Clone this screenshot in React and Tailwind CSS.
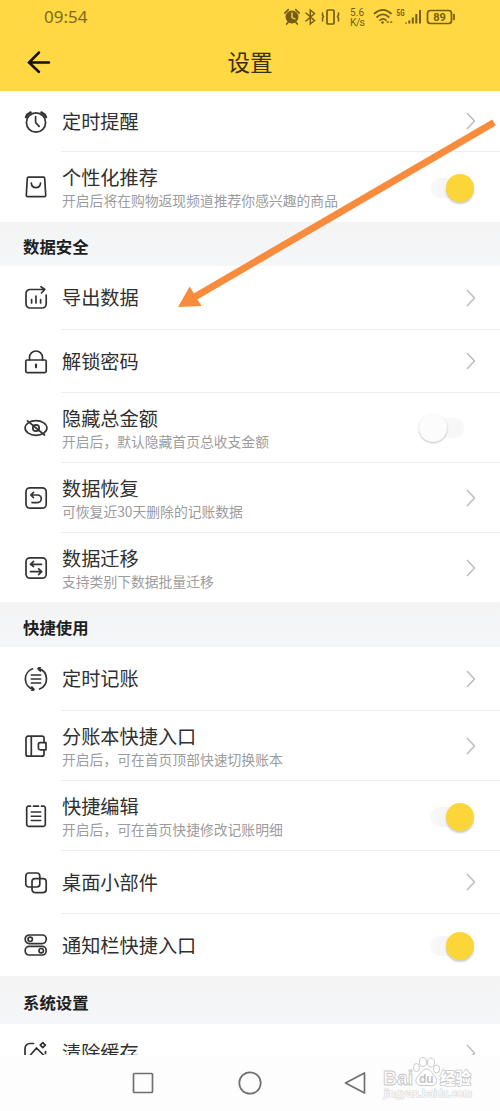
const icons = {
  alarm: (
    <>
      <circle cx="12" cy="12.5" r="9.6" />
      <path d="M2 7.2C2.8 5 4.4 3.4 6.6 2.4M22 7.2C21.2 5 19.6 3.4 17.4 2.4" strokeWidth="2.4" />
      <path d="M11.6 6.7v6l3.6 3.6" />
    </>
  ),
  bag: (
    <>
      <path d="M4.5 2.2h15a1.2 1.2 0 0 1 1.2 1.1l1 17a1.2 1.2 0 0 1-1.2 1.3h-17a1.2 1.2 0 0 1-1.2-1.3l1-17a1.2 1.2 0 0 1 1.2-1.1z" />
      <path d="M7.3 8.2c.7 6 8.5 6 9.2 0" />
    </>
  ),
  exportData: (
    <>
      <path d="M22.2 9v9a4 4 0 0 1-4 4H6a4 4 0 0 1-4-4V7.5a4 4 0 0 1 4-4h14.5M17 .8l3.800 2.700L17.500 7" />
      <path d="M7.6 13.5V17M12 10v7M16.6 13.5V17" />
    </>
  ),
  lock: (
    <>
      <rect x="1.8" y="10" width="20.4" height="12.6" rx="1.3" />
      <path d="M5.5 10V7.5a6.500 6.500 0 0 1 13 0V10" />
      <path d="M12 14.5v2.800" strokeWidth="2.2" />
    </>
  ),
  eyeOff: (
    <>
      <ellipse cx="12" cy="12" rx="10.9" ry="7.300" />
      <circle cx="12" cy="12" r="3.200" />
      <path d="M3.500 4.800 20.500 19" />
    </>
  ),
  restore: (
    <>
      <rect x="2" y="1.800" width="20.200" height="20.400" rx="4" />
      <path d="M9.500 6.300 6.800 9l2.700 2.700M7 9h6.500a3.800 3.800 0 0 1 0 7.600H8" />
    </>
  ),
  transfer: (
    <>
      <rect x="2" y="1.800" width="20.200" height="20.400" rx="4" />
      <path d="M9.600 5.300 6.500 8.300l3.100 2.300M6.500 8.300h11M14.600 12.900l3.100 2.800-3.100 3M17.500 15.700h-11" />
    </>
  ),
  cycle: (
    <>
      <path d="M9.300 22.400A10.800 10.800 0 0 1 8.600 1.800M14.800 1.600a10.800 10.800 0 0 1 .8 20.400" />
      <path d="M16.200 0l-2 1.700 2.200 2.200M7.800 20.200l2 2.200-2.200 1.800" strokeWidth="2" />
      <path d="M7.200 8h9.600M7.200 12h9.600M7.200 16h9.600" strokeWidth="1.400" />
    </>
  ),
  book: (
    <>
      <path d="M20 8.300V4.200a2 2 0 0 0-2-2H4a2 2 0 0 0-2 2v16a2 2 0 0 0 2 2h14a2 2 0 0 0 2-2v-3.800M7.300 2.200v20" />
      <path d="M16.200 8.600H22v7.200h-5.800a1.800 1.800 0 0 1-1.800-1.800v-3.600a1.800 1.800 0 0 1 1.800-1.800z" />
    </>
  ),
  note: (
    <>
      <path d="M6.500 2.200h-2a1.800 1.800 0 0 0-1.800 1.800v16.500a1.800 1.800 0 0 0 1.800 1.800h15a1.800 1.800 0 0 0 1.800-1.800V4a1.800 1.800 0 0 0-1.800-1.800h-2M9.500 2.200h5" />
      <path d="M7.200 8h9.600M7.200 12.300h9.600M7.200 16.500h9.600" strokeWidth="1.400" />
    </>
  ),
  widget: (
    <>
      <rect x="1.800" y="2" width="14" height="14" rx="3" />
      <rect x="8" y="7.600" width="14.200" height="14" rx="3" />
    </>
  ),
  switches: (
    <>
      <rect x="1.200" y="2" width="21" height="8.600" rx="4" />
      <circle cx="6.200" cy="6.300" r="2.200" />
      <rect x="1.200" y="13.400" width="21" height="8.600" rx="4" />
      <circle cx="17.200" cy="17.700" r="2.200" />
    </>
  ),
  clean: (
    <>
      <path d="M9.500 2.500H6a5 5 0 0 0-5 5v14M6 14.500 12.500 7l8 8-6.500 7zM18.800 1.600l2.500 2.500-2.500 2.500-2.500-2.500z" />
      <path d="M21.500 10.500v2" />
    </>
  ),
};

const groups = [
  {
    rows: [
      { icon: 'alarm', title: '定时提醒', control: 'arrow', height: 'h-[61px]' },
      { icon: 'bag', title: '个性化推荐', sub: '开启后将在购物返现频道推荐你感兴趣的商品', control: 'on', height: 'h-[70px]' },
    ],
  },
  {
    name: '数据安全',
    height: 'h-[44px] pt-1',
    rows: [
      { icon: 'exportData', title: '导出数据', control: 'arrow', height: 'h-16' },
      { icon: 'lock', title: '解锁密码', control: 'arrow', height: 'h-[63px]' },
      { icon: 'eyeOff', title: '隐藏总金额', sub: '开启后，默认隐藏首页总收支金额', control: 'off', height: 'h-[70px]' },
      { icon: 'restore', title: '数据恢复', sub: '可恢复近30天删除的记账数据', control: 'arrow', height: 'h-[70px]' },
      { icon: 'transfer', title: '数据迁移', sub: '支持类别下数据批量迁移', control: 'arrow', height: 'h-[69px]' },
    ],
  },
  {
    name: '快捷使用',
    height: 'h-[45px] pt-1.5',
    rows: [
      { icon: 'cycle', title: '定时记账', control: 'arrow', height: 'h-16' },
      { icon: 'book', title: '分账本快捷入口', sub: '开启后，可在首页顶部快速切换账本', control: 'arrow', height: 'h-[70px]' },
      { icon: 'note', title: '快捷编辑', sub: '开启后，可在首页快捷修改记账明细', control: 'on', height: 'h-[70px]' },
      { icon: 'widget', title: '桌面小部件', control: 'arrow', height: 'h-[63px]' },
      { icon: 'switches', title: '通知栏快捷入口', control: 'on', height: 'h-[62px]' },
    ],
  },
  {
    name: '系统设置',
    height: 'h-12 pt-1',
    rows: [{ icon: 'clean', title: '清除缓存', control: 'arrow', height: 'h-[57px]' }],
  },
];

function StatusIcons() {
  return (
    <svg className="h-[30px] w-[174px]" viewBox="283 2 174 30" fill="none" stroke="#745d16" strokeWidth="1.700" strokeLinecap="round">
      <circle cx="292" cy="17" r="6.500" fill="#745d16" stroke="none" />
      <path d="M284.800 13.200l3.500-3.500M295.700 9.700l3.500 3.500M288 22.500l-1.300 1.500M296 22.500l1.300 1.500" />
      <path d="M292 13v4.500l3 1.500" stroke="#ffd843" strokeWidth="1.300" />
      <path d="M306 13l8.500 7.500-4.200 3.500V10l4.200 3.500L306 21" strokeWidth="1.500" />
      <rect x="327" y="10" width="7" height="14" rx="1" />
      <path d="M322.500 13v2l1 1.500-1 1.500v3M338.500 13v2l-1 1.500 1 1.500v3" strokeWidth="1.500" />
      <g fill="#745d16" stroke="none" fontFamily="Roboto, sans-serif" textAnchor="middle">
        <text x="357" y="15.500" fontSize="10" textLength="14">5.6</text>
        <text x="357.500" y="25.500" fontSize="10.500" textLength="15">K/s</text>
        <text x="400.500" y="15.800" fontSize="9" fontWeight="700" textLength="8" lengthAdjust="spacingAndGlyphs">5G</text>
        <text x="439.500" y="20.800" fontSize="11" fontWeight="700">89</text>
      </g>
      <path d="M374.500 13.500c5.500-4.500 11.500-4.500 16.500 0M377 17c3.800-3.300 8-3.300 11.700 0M380 20.200c2-1.700 4-1.700 6 0" />
      <circle cx="382.500" cy="22.500" r="1.300" fill="#745d16" stroke="none" />
      <path d="M387.500 22h.5M391 22h.5" />
      <path d="M406 23.500v-1M409.300 23.500v-3M412.800 23.500v-6M416.300 23.500v-9.500M420 23.500V10" strokeWidth="2" strokeLinecap="butt" />
      <rect x="427.500" y="10.500" width="24" height="13" rx="3" />
      <path d="M454 14.500v5" />
    </svg>
  );
}

function Chevron() {
  return (
    <svg className="mr-[23px] h-5 w-3" viewBox="0 0 12 20" fill="none" stroke="#bcbcbe" strokeWidth="1.500">
      <path d="M2 2l7.500 8L2 18" />
    </svg>
  );
}

function Toggle({ on }) {
  if (on) {
    return (
      <div className="mr-[26px] mt-0.5 flex h-5 w-11 items-center justify-end rounded-full bg-gradient-to-r from-[#f9f9f9] to-[#eeeeef]">
        <div className="h-7 w-7 shrink-0 rounded-full bg-[#fcd638] shadow-[0_2px_2px_rgba(0,0,0,0.2)]"></div>
      </div>
    );
  }
  return (
    <div className="mr-9 flex h-5 w-[45px] items-center rounded-full bg-[#f7f7f7]">
      <div className="h-7 w-7 shrink-0 rounded-full bg-[#fcfcfc] shadow-[0_1px_2px_rgba(0,0,0,0.25)]"></div>
    </div>
  );
}

function Row({ row, last }) {
  return (
    <div className={`flex shrink-0 pl-6 ${row.height}`}>
      <div className="flex w-[37px] items-center">
        <svg className="h-6 w-6" viewBox="0 0 24 24" fill="none" stroke="#333333" strokeWidth="1.700" strokeLinecap="round" strokeLinejoin="round">
          {icons[row.icon]}
        </svg>
      </div>
      <div className={`flex flex-1 items-center justify-between pl-px ${last ? '' : 'border-b border-[#ededee]'}`}>
        <div className="whitespace-nowrap">
          <div className="text-[19.2px] leading-[27px] text-[#303030]">{row.title}</div>
          {row.sub && <div className="text-[13.8px] leading-[19px] text-[#9c9c9e]">{row.sub}</div>}
        </div>
        {row.control === 'arrow' ? <Chevron /> : <Toggle on={row.control === 'on'} />}
      </div>
    </div>
  );
}

function Watermark() {
  return (
    <svg className="absolute left-[379px] top-[1052px] h-[54px] w-[100px]" viewBox="379 1052 100 54" fill="#ffffff" stroke="#cacaca" strokeWidth="1">
      <g fontFamily="'Liberation Sans', 'Noto Sans CJK SC', sans-serif" fontWeight="700">
        <text x="383" y="1085" fontSize="21" textLength="30" lengthAdjust="spacingAndGlyphs">Bai</text>
        <text x="440" y="1083.500" fontSize="15.500" textLength="31" lengthAdjust="spacingAndGlyphs" paintOrder="stroke" strokeWidth="1.600">经验</text>
      </g>
      <ellipse cx="416.500" cy="1067.500" rx="3" ry="4" />
      <ellipse cx="423" cy="1062" rx="3.500" ry="4.500" />
      <ellipse cx="431" cy="1062.500" rx="3.500" ry="4.500" />
      <ellipse cx="436.500" cy="1069" rx="3" ry="4" />
      <path d="M426.500 1069c4 0 5 4 8 7 3.500 3.500 2.500 9-2.500 9.500h-11c-6-.5-6.500-6-3-9.500 3-3 4.500-7 8.500-7z" />
      <text x="419" y="1083" fontSize="12" fontFamily="'Liberation Sans', sans-serif" fontWeight="700" fill="#c4c4c4" stroke="none">du</text>
      <text x="384" y="1096.500" fontSize="10.500" fontFamily="'Liberation Sans', sans-serif" textLength="88" strokeWidth="1.200" stroke="#dadada" paintOrder="stroke">jingyan.baidu.com</text>
    </svg>
  );
}

function App() {
  return (
    <div className="relative flex h-[1111px] w-[500px] flex-col overflow-hidden bg-[#fefefe] font-['Noto_Sans_CJK_SC',sans-serif]">
      <header className="h-[91px] shrink-0 bg-[#ffd843]">
        <div className="flex h-[34px] items-center justify-between pl-[44px] pr-[43px]">
          <span className="font-['Noto_Sans',sans-serif] text-[17px] text-[#806818]">09:54</span>
          <StatusIcons />
        </div>
        <div className="grid h-14 grid-cols-3 items-center">
          <svg className="ml-[27px] h-6 w-6" viewBox="0 0 24 24" fill="none" stroke="#151208" strokeWidth="2.500" strokeLinecap="round">
            <path d="M22 12.500H2M12 2.500 2 12.500l10 9.500" />
          </svg>
          <h1 className="text-center text-[22.6px] text-[#382f10]">设置</h1>
        </div>
      </header>

      <main className="flex h-[964px] shrink-0 flex-col overflow-hidden bg-white">
        {groups.map((group, i) => (
          <section key={i} className="shrink-0">
            {group.name && (
              <h2 className={`flex items-center bg-gradient-to-b from-[#f4f4f4] to-[#f4f6f9] pl-[23px] text-[16.4px] font-bold text-[#202020] ${group.height}`}>
                {group.name}
              </h2>
            )}
            {group.rows.map((row, j) => (
              <Row key={row.title} row={row} last={j === group.rows.length - 1} />
            ))}
          </section>
        ))}
      </main>

      {/* Android navigation bar */}
      <nav className="flex h-14 shrink-0 items-center bg-[#fdfdfd] pl-[131px]">
        <svg className="h-6 w-[236px]" viewBox="0 0 236 24" fill="none" stroke="#707070" strokeWidth="1.700" strokeLinejoin="round">
          <rect x="2.500" y="2.500" width="19" height="19" rx="1" />
          <circle cx="119" cy="12" r="10.700" />
          <path d="M233.500 2v20l-19-10z" />
        </svg>
      </nav>

      <svg className="pointer-events-none absolute left-0 top-0 h-[320px] w-[500px]" viewBox="0 0 500 320">
        <path d="M494 122.500 192 298.500" stroke="#f98b3c" strokeWidth="7" />
        <path d="M178 307 189.700 286.500 201.500 306z" fill="#f98b3c" />
      </svg>
      <Watermark />
    </div>
  );
}

export default App;
